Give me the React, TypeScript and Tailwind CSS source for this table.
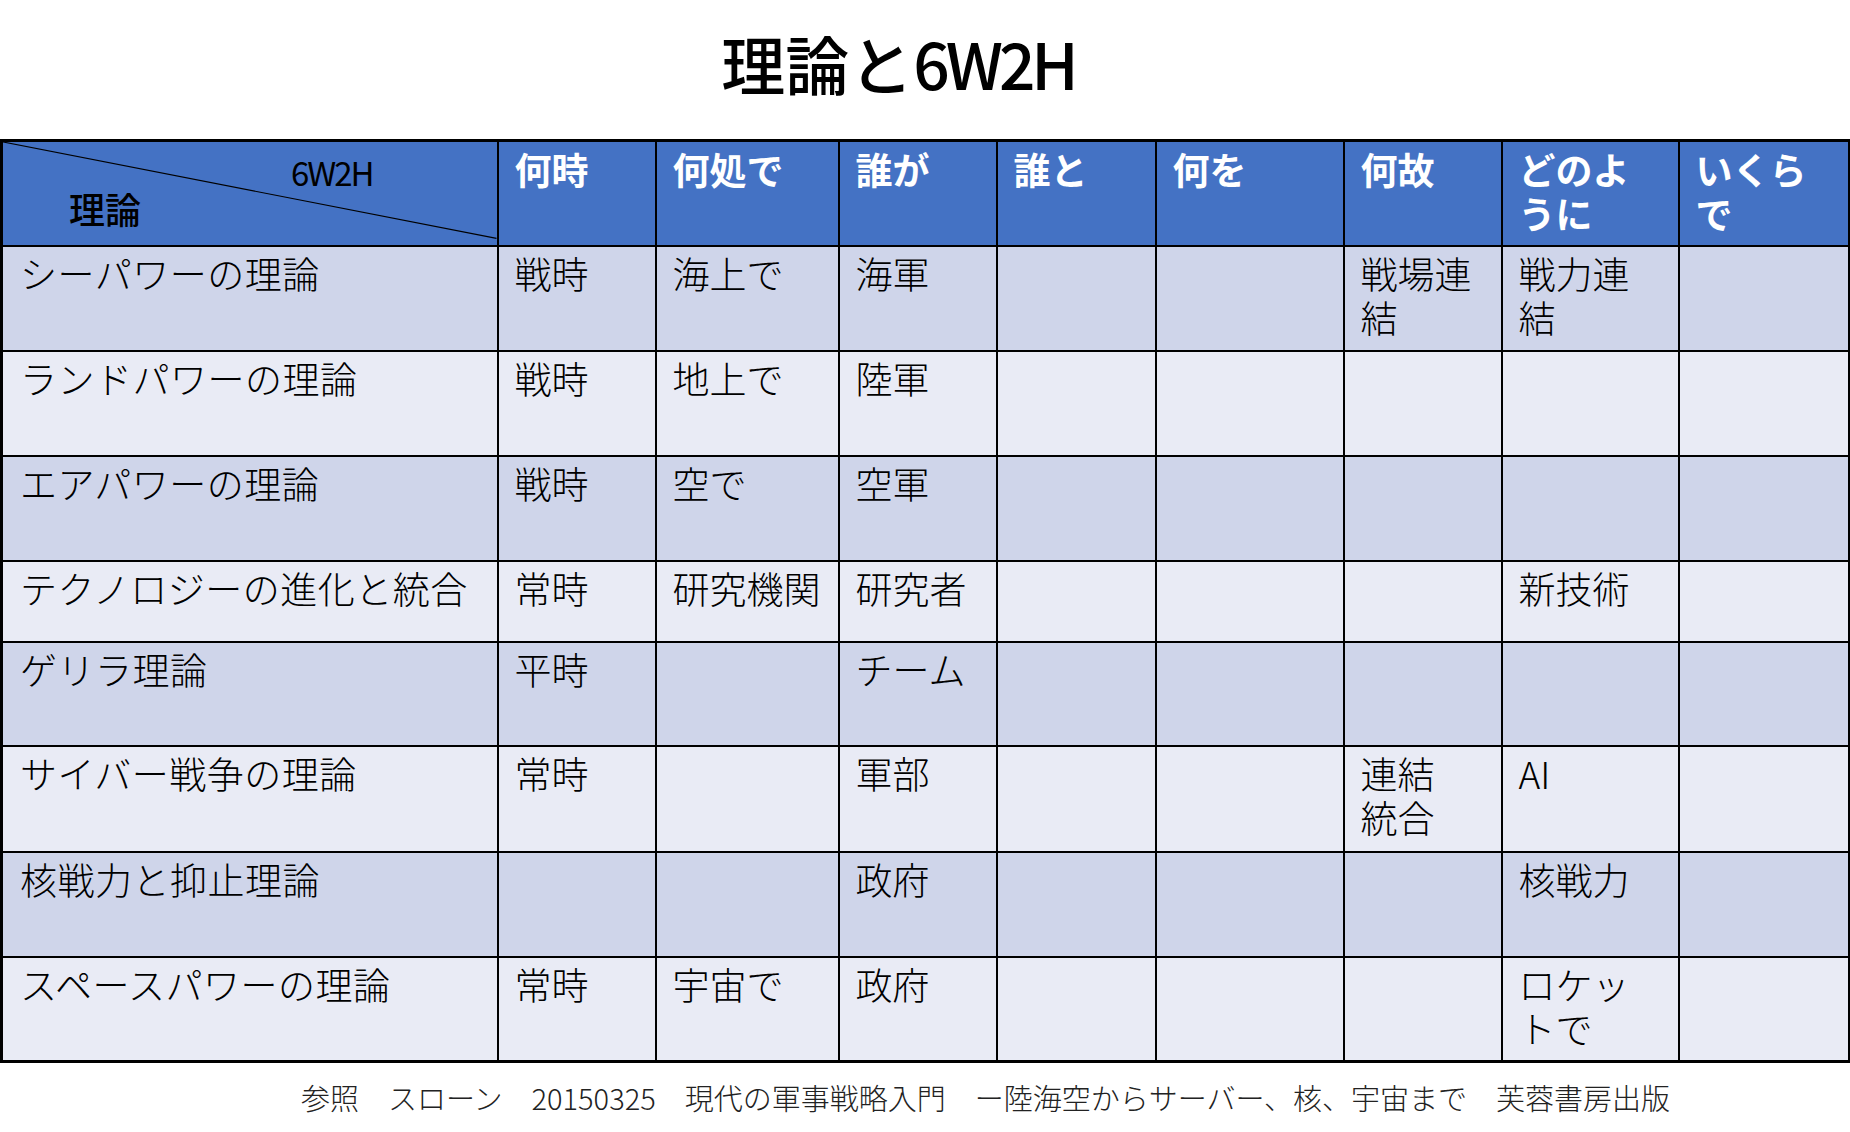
import React from "react"

// columns widths measured from the slide
const cols = [496, 158, 183, 158, 159, 188, 158, 177, 171]

const heads = [["何時"], ["何処で"], ["誰が"], ["誰と"], ["何を"], ["何故"], ["どのよ", "うに"], ["いくら", "で"]]

type Row = { name: string; cells: string[][]; h: string; dark: boolean }

const rows: Row[] = [
  { name: "シーパワーの理論", cells: [["戦時"], ["海上で"], ["海軍"], [], [], ["戦場連", "結"], ["戦力連", "結"], []], h: "h-[105px]", dark: true },
  { name: "ランドパワーの理論", cells: [["戦時"], ["地上で"], ["陸軍"], [], [], [], [], []], h: "h-[105px]", dark: false },
  { name: "エアパワーの理論", cells: [["戦時"], ["空で"], ["空軍"], [], [], [], [], []], h: "h-[105px]", dark: true },
  { name: "テクノロジーの進化と統合", cells: [["常時"], ["研究機関"], ["研究者"], [], [], [], ["新技術"], []], h: "h-[81px]", dark: false },
  { name: "ゲリラ理論", cells: [["平時"], [], ["チーム"], [], [], [], [], []], h: "h-[104px]", dark: true },
  { name: "サイバー戦争の理論", cells: [["常時"], [], ["軍部"], [], [], ["連結", "統合"], ["AI"], []], h: "h-[106px]", dark: false },
  { name: "核戦力と抑止理論", cells: [[], [], ["政府"], [], [], [], ["核戦力"], []], h: "h-[105px]", dark: true },
  { name: "スペースパワーの理論", cells: [["常時"], ["宇宙で"], ["政府"], [], [], [], ["ロケッ", "トで"], []], h: "h-[105px]", dark: false },
]

function Lines({ lines }: { lines: string[] }) {
  return (
    <>
      {lines.map((l, i) => (
        <div key={i} className="whitespace-nowrap h-[44px]">{l}</div>
      ))}
    </>
  )
}

export default function App() {
  return (
    <div className="w-[1850px] h-[1132px] bg-white font-['Noto_Sans_CJK_JP',sans-serif] text-black overflow-hidden">
      <div className="h-[139px] flex justify-center pr-[54px] pt-[22px]">
        <h1 className="text-[64px] leading-[80px] font-medium">
          理論と<span className="tracking-[-4px]">6W2H</span>
        </h1>
      </div>

      <table className="w-[1848px] table-fixed border-collapse border-[3px] border-black">
        <colgroup>
          {cols.map((w, i) => (
            <col key={i} style={{ width: w }} />
          ))}
        </colgroup>
        <thead>
          <tr className="h-[105px] bg-[#4472c4]">
            <th className="relative border-2 border-black p-0 align-top text-left font-normal">
              <svg className="absolute inset-0 w-full h-full" viewBox="0 0 100 100" preserveAspectRatio="none">
                <line x1="0" y1="0" x2="100" y2="94" stroke="#000" strokeWidth="1.2" vectorEffect="non-scaling-stroke" />
              </svg>
              <div className="relative flex flex-col">
                <span className="ml-[288px] mt-[10px] text-[33px] leading-[40px] tracking-[-2px] text-black">6W2H</span>
                <span className="ml-[66px] mt-[-6px] text-[36px] leading-[44px] font-medium text-black">理論</span>
              </div>
            </th>
            {heads.map((h, i) => (
              <th key={i} className="border-2 border-black align-top text-left pl-[16px] pt-[5px] text-[37px] leading-[44px] font-bold text-white">
                <Lines lines={h} />
              </th>
            ))}
          </tr>
        </thead>
        <tbody>
          {rows.map((r, i) => (
            <tr key={i} className={`${r.h} ${r.dark ? "bg-[#cfd5ea]" : "bg-[#e9ebf5]"}`}>
              <td className="border-2 border-black align-top pl-[17px] pt-[4px] text-[37px] leading-[44px] font-light whitespace-nowrap tracking-[0.5px]">{r.name}</td>
              {r.cells.map((c, j) => (
                <td key={j} className="border-2 border-black align-top pl-[16px] pt-[4px] text-[37px] leading-[44px] font-light">
                  <Lines lines={c} />
                </td>
              ))}
            </tr>
          ))}
        </tbody>
      </table>

      <div className="pl-[301px] pt-[14px] text-[29px] leading-[40px] font-light text-[#222] whitespace-nowrap">
        参照　スローン　20150325　現代の軍事戦略入門　ー陸海空からサーバー、核、宇宙まで　芙蓉書房出版
      </div>
    </div>
  )
}
